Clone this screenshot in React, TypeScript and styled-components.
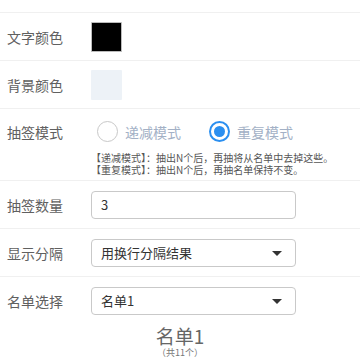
import React from "react";
import styled, { createGlobalStyle } from "styled-components";

const GlobalStyle = createGlobalStyle`
  html, body {
    margin: 0;
    padding: 0;
    background: #ffffff;
    font-family: "Noto Sans CJK SC", "Noto Sans", sans-serif;
  }
  * { box-sizing: border-box; }
`;

const Page = styled.div`
  width: 360px;
  height: 360px;
  overflow: hidden;
  background: #fff;
`;

const TopStrip = styled.div`
  height: 13px;
  border-bottom: 1px solid #f0f0f0;
`;

const Row = styled.div<{ $last?: boolean }>`
  display: flex;
  align-items: center;
  height: 48px;
  padding-left: 7px;
  border-bottom: 1px solid ${({ $last }) => ($last ? "transparent" : "#f0f0f0")};
`;

const Label = styled.div`
  width: 84px;
  flex: none;
  font-size: 14px;
  color: #606060;
`;

const Swatch = styled.div<{ $color: string; $border?: boolean }>`
  width: 31px;
  height: 30px;
  background: ${({ $color }) => $color};
  border: 1px solid ${({ $border }) => ($border ? "#bbb" : "transparent")};
  border-radius: 1px;
`;

const ModeBlock = styled.div`
  padding: 8px 0 5px 7px;
  border-bottom: 1px solid #f0f0f0;
`;

const ModeLine = styled.div`
  display: flex;
  align-items: center;
  height: 29px;
`;

const RadioGroup = styled.div`
  display: flex;
  align-items: center;
  gap: 28px;
  padding-left: 6px;
`;

const RadioItem = styled.label`
  display: flex;
  align-items: center;
  gap: 7px;
  font-size: 14px;
  color: #a3b1c6;
`;

const Circle = styled.span<{ $checked?: boolean }>`
  width: 21px;
  height: 21px;
  border-radius: 50%;
  border: ${({ $checked }) => ($checked ? "2px solid #2b8ff0" : "1.5px solid #c8c8c8")};
  display: flex;
  align-items: center;
  justify-content: center;

  &::after {
    content: "";
    width: 11px;
    height: 11px;
    border-radius: 50%;
    background: ${({ $checked }) => ($checked ? "#2b8ff0" : "transparent")};
  }
`;

const Hint = styled.div`
  margin: 6px 0 0 84px;
  font-size: 10px;
  line-height: 11.5px;
  color: #555;
  white-space: nowrap;
`;

const Field = styled.div`
  position: relative;
  width: 205px;
  height: 28px;
  border: 1px solid #c9c9c9;
  border-radius: 4px;
  display: flex;
  align-items: center;
  padding-left: 9px;
  font-size: 13px;
  color: #333;
  background: #fff;
`;

const Caret = styled.span`
  position: absolute;
  right: 13px;
  top: 11px;
  width: 0;
  height: 0;
  border-left: 5px solid transparent;
  border-right: 5px solid transparent;
  border-top: 5px solid #333;
`;

const TitleBlock = styled.div`
  display: flex;
  flex-direction: column;
  align-items: center;
`;

const Title = styled.div`
  font-size: 19px;
  line-height: 21px;
  color: #666;
`;

const Sub = styled.div`
  margin-top: 1px;
  font-size: 9px;
  line-height: 11px;
  color: #777;
`;

export default function App() {
  return (
    <Page>
      <GlobalStyle />
      <TopStrip />
      <Row>
        <Label>文字颜色</Label>
        <Swatch $color="#000" $border />
      </Row>
      <Row>
        <Label>背景颜色</Label>
        <Swatch $color="#edf2f7" />
      </Row>
      <ModeBlock>
        <ModeLine>
          <Label>抽签模式</Label>
          <RadioGroup>
            <RadioItem>
              <Circle />
              递减模式
            </RadioItem>
            <RadioItem>
              <Circle $checked />
              重复模式
            </RadioItem>
          </RadioGroup>
        </ModeLine>
        <Hint>
          【递减模式】：抽出N个后，再抽将从名单中去掉这些。
          <br />
          【重复模式】：抽出N个后，再抽名单保持不变。
        </Hint>
      </ModeBlock>
      <Row>
        <Label>抽签数量</Label>
        <Field>3</Field>
      </Row>
      <Row>
        <Label>显示分隔</Label>
        <Field>
          用换行分隔结果
          <Caret />
        </Field>
      </Row>
      <Row $last>
        <Label>名单选择</Label>
        <Field>
          名单1
          <Caret />
        </Field>
      </Row>
      <TitleBlock>
        <Title>名单1</Title>
        <Sub>（共11个）</Sub>
      </TitleBlock>
    </Page>
  );
}
